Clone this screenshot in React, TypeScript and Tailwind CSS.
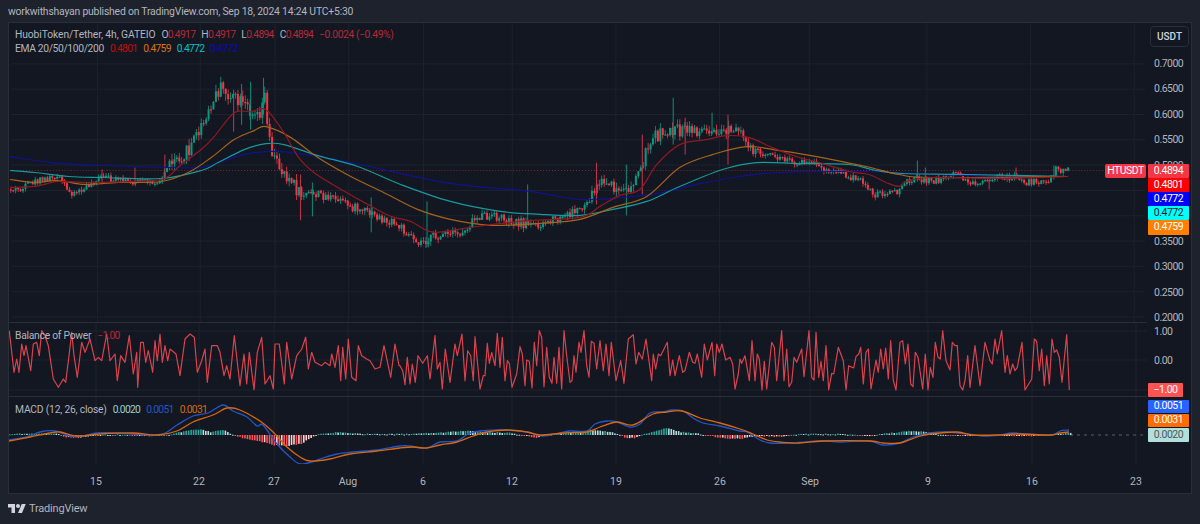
import React from "react";

type Pt = [number, number];

const pricePath: Pt[] = [
  [8, 190], [20, 190], [30, 183], [43, 180], [53, 176], [60, 182], [65, 192], [72, 193], [83, 190], [90, 182], [100, 178],
  [117, 182], [133, 182], [147, 183], [160, 180], [165, 167], [173, 157], [187, 153], [190, 143], [205, 120],
  [218, 88], [232, 100], [245, 108], [258, 112], [263, 92], [267, 130], [272, 158], [285, 175], [298, 195], [320, 195],
  [345, 205], [370, 215], [400, 228], [418, 242], [440, 236], [460, 235], [475, 218], [500, 218], [530, 226], [560, 220],
  [585, 205], [600, 182], [625, 195], [640, 170], [650, 140], [670, 130], [690, 132], [715, 128], [740, 135], [755, 150],
  [770, 157], [800, 163], [813, 164], [825, 172], [840, 173], [855, 180], [863, 182], [874, 195], [887, 192], [900, 193],
  [903, 182], [917, 179], [933, 182], [947, 178], [960, 173], [965, 183], [973, 184], [990, 183], [1000, 177], [1017, 178],
  [1028, 183], [1050, 182], [1057, 170], [1063, 170], [1069, 171],
];

const ema20: Pt[] = [
  [8, 188], [33, 187], [57, 182], [87, 183], [133, 182], [163, 179], [180, 165], [200, 150], [213, 137], [233, 113], [250, 112], [265, 110],
  [283, 133], [297, 157], [313, 173], [337, 188], [367, 205], [390, 217], [410, 222], [433, 233], [470, 228], [520, 222],
  [580, 218], [600, 207], [620, 196], [640, 190], [657, 165], [680, 145], [707, 140], [727, 136], [750, 138], [773, 148],
  [800, 158], [820, 163], [850, 172], [870, 175], [887, 183], [900, 187], [907, 182], [933, 178], [1000, 179], [1069, 177],
];
const ema50: Pt[] = [
  [8, 180], [33, 183], [57, 181], [83, 185], [117, 183], [160, 182], [187, 173], [210, 158], [233, 140], [253, 131], [265, 127], [290, 138],
  [317, 158], [350, 177], [383, 193], [417, 210], [450, 220], [490, 226], [540, 224], [580, 220], [613, 208], [647, 197],
  [680, 168], [713, 155], [747, 147], [780, 151], [800, 154], [833, 160], [867, 167], [900, 175], [933, 178], [1069, 177],
];
const ema100: Pt[] = [
  [8, 171], [33, 173], [67, 177], [100, 178], [160, 179], [200, 171], [217, 163], [243, 150], [265, 144], [283, 145], [317, 156], [357, 167],
  [400, 185], [450, 202], [500, 212], [540, 215], [580, 216], [613, 210], [647, 202], [680, 187], [723, 170], [757, 163],
  [800, 164], [850, 165], [877, 171], [903, 174], [967, 175], [1069, 177],
];
const ema200: Pt[] = [
  [8, 157], [50, 163], [100, 166], [167, 168], [200, 168], [217, 163], [243, 155], [265, 152], [290, 153], [350, 163], [450, 184],
  [530, 192], [580, 200], [623, 198], [663, 193], [697, 185], [740, 177], [780, 173], [867, 172], [917, 174], [1000, 177],
  [1069, 177],
];

const macdLine: Pt[] = [
  [9, 441], [27, 438], [40, 433], [55, 432], [70, 437], [83, 437], [97, 434], [117, 434], [133, 435], [160, 436],
  [177, 426], [193, 417], [208, 414], [223, 406], [233, 412], [247, 418], [257, 427], [263, 426], [277, 445], [290, 458],
  [300, 465], [312, 463], [323, 459], [337, 455], [353, 453], [377, 451], [400, 447], [410, 447], [420, 449], [430, 448],
  [440, 443], [457, 442], [468, 435], [480, 432], [507, 431], [527, 433], [542, 437], [560, 434], [570, 432], [587, 432],
  [595, 425], [607, 422], [617, 423], [630, 428], [640, 425], [650, 414], [663, 413], [672, 411], [683, 412], [693, 419],
  [703, 424], [720, 427], [740, 432], [747, 433], [760, 441], [770, 444], [790, 444], [820, 442], [840, 443], [870, 442],
  [883, 446], [900, 444], [913, 438], [930, 434], [947, 433], [967, 435], [983, 437], [1000, 436], [1013, 434], [1040, 436],
  [1053, 436], [1060, 432], [1069, 431],
];
const macdSignal: Pt[] = [
  [9, 442], [30, 438], [50, 434], [60, 433], [77, 437], [100, 435], [133, 434], [157, 436], [177, 432], [193, 423],
  [213, 416], [227, 409], [240, 411], [260, 422], [273, 433], [287, 448], [300, 458], [310, 462], [330, 460], [350, 455],
  [377, 452], [400, 449], [413, 448], [427, 449], [440, 446], [457, 443], [473, 437], [487, 433], [507, 431], [527, 433],
  [540, 436], [563, 434], [587, 433], [600, 428], [617, 423], [633, 426], [653, 415], [667, 413], [682, 412], [700, 419],
  [720, 424], [740, 430], [753, 435], [767, 441], [780, 443], [800, 444], [823, 442], [870, 442], [883, 444], [900, 444],
  [917, 438], [930, 435], [957, 433], [973, 436], [997, 436], [1017, 435], [1050, 436], [1060, 434], [1069, 433],
];

// histogram height in px, traced from the reference
const histPts: Pt[] = [
  [9, 1], [50, 1.5], [58, 1], [65, -2], [80, -3], [90, -0.5], [120, 0.5], [150, -1], [165, 0], [175, 2], [190, 5], [197, 6],
  [210, 3], [222, 5.5], [228, 2], [235, -1], [250, -5], [262, -7], [272, -10], [285, -11], [300, -9], [312, -2], [318, 1],
  [340, 3], [360, 1], [410, 1], [433, 2], [470, 4.5], [480, 3], [510, 2], [525, -1], [535, -3], [540, -1], [550, 1], [590, 5],
  [610, 3], [620, 0], [625, -3], [635, -3], [640, 0], [650, 3], [665, 7], [680, 3], [700, 1], [710, -1], [720, -3], [740, -4],
  [750, -2], [760, -1], [780, -2], [790, 0], [800, 1], [840, 1], [870, -1], [880, 1], [910, 4], [925, 3], [940, 0], [960, -0.5],
  [990, -0.5], [1030, -1], [1050, 0.5], [1070, 2],
];

// BOP line traced off three zoomed crops (3x), each with its own origin
const bopA: Pt[] = [
  [28, 35], [42, 160], [50, 120], [57, 160], [65, 75], [72, 110], [78, 80], [92, 155], [100, 75], [110, 70], [118, 110], [125, 35],
  [135, 50], [145, 80], [160, 180], [175, 205], [190, 180], [197, 190], [207, 110], [215, 40], [222, 110], [232, 175], [245, 70],
  [255, 100], [270, 60], [285, 125], [295, 115], [305, 125], [320, 45], [330, 125], [345, 105], [352, 185], [362, 110], [375, 130],
  [388, 50], [400, 165], [410, 100], [413, 205], [422, 70], [430, 70], [437, 130], [445, 95], [458, 160], [465, 65], [472, 125],
  [480, 45], [487, 130], [495, 80], [503, 125], [510, 90], [528, 105], [540, 170], [555, 60], [570, 45], [583, 55], [592, 160],
  [605, 125], [615, 90], [622, 190], [635, 80], [652, 80], [660, 100], [672, 170], [680, 140], [690, 180], [703, 50], [712, 130],
  [720, 200], [732, 105], [740, 195], [748, 100], [762, 212], [772, 100], [785, 55], [795, 195], [810, 170], [820, 210], [825, 75],
  [838, 75], [853, 195], [860, 70], [875, 180], [890, 110], [905, 90], [917, 55], [925, 150], [935, 100], [945, 130], [965, 140],
  [975, 130], [990, 140], [995, 105], [1005, 145], [1015, 80], [1022, 185], [1028, 85], [1037, 180], [1045, 60], [1055, 175],
  [1068, 185], [1075, 80], [1085, 110], [1100, 120], [1110, 125], [1125, 150], [1140, 145], [1152, 80], [1172, 175], [1185, 75], [1197, 140],
];
const bopB: Pt[] = [
  [0, 125], [8, 140], [15, 182], [22, 100], [30, 180], [37, 120], [46, 175], [54, 95], [68, 118], [82, 95], [90, 165], [105, 35],
  [112, 135], [120, 115], [127, 195], [136, 75], [150, 175], [165, 60], [172, 95], [186, 30], [195, 170], [203, 80], [212, 95],
  [220, 170], [225, 38], [240, 195], [250, 155], [255, 155], [262, 58], [268, 118], [275, 85], [285, 125], [292, 28], [300, 130],
  [307, 40], [315, 170], [322, 110], [328, 118], [336, 190], [350, 150], [360, 68], [367, 90], [375, 185], [380, 108], [388, 112],
  [396, 192], [403, 55], [410, 125], [418, 20], [425, 40], [432, 188], [440, 70], [448, 160], [456, 178], [462, 100], [470, 178],
  [477, 70], [485, 195], [492, 20], [500, 95], [510, 175], [516, 170], [522, 95], [528, 145], [537, 55], [543, 85], [552, 20],
  [560, 125], [567, 160], [574, 52], [582, 58], [590, 135], [600, 50], [610, 140], [618, 60], [627, 155], [634, 55], [648, 170],
  [662, 110], [672, 178], [685, 45], [700, 32], [708, 120], [716, 85], [727, 105], [738, 45], [755, 170], [760, 90], [767, 135],
  [775, 90], [782, 95], [802, 55], [810, 155], [818, 108], [825, 155], [838, 95], [848, 145], [855, 140], [868, 85], [878, 115],
  [885, 118], [892, 90], [905, 160], [913, 60], [922, 108], [936, 55], [944, 155], [950, 60], [958, 85], [966, 60], [977, 108],
  [990, 100], [998, 120], [1005, 195], [1015, 150],
];
const bopC: Pt[] = [
  [0, 105], [5, 118], [15, 95], [28, 170], [36, 50], [45, 170], [52, 90], [58, 105], [66, 198], [73, 112], [80, 195], [95, 55],
  [103, 70], [110, 170], [125, 20], [132, 170], [140, 75], [147, 188], [155, 175], [162, 100], [170, 115], [185, 75], [192, 158],
  [207, 20], [215, 160], [222, 168], [228, 25], [236, 160], [243, 112], [250, 170], [258, 65], [266, 198], [275, 148], [281, 150],
  [295, 70], [310, 110], [318, 198], [326, 125], [341, 132], [348, 98], [356, 90], [362, 70], [370, 180], [378, 85], [385, 75],
  [393, 195], [408, 108], [415, 145], [422, 75], [430, 135], [437, 72], [445, 165], [452, 50], [460, 170], [468, 198], [480, 55],
  [488, 50], [496, 120], [504, 60], [512, 180], [519, 188], [526, 85], [534, 100], [548, 195], [556, 90], [564, 198], [571, 130],
  [579, 160], [586, 55], [594, 100], [601, 105], [608, 20], [618, 110], [630, 138], [637, 55], [645, 65], [652, 65], [660, 185],
  [668, 198], [675, 170], [683, 95], [690, 190], [705, 65], [720, 185], [735, 55], [750, 110], [757, 120], [765, 45], [772, 90],
  [785, 20], [795, 145], [802, 95], [810, 150], [818, 120], [825, 140], [832, 130], [846, 55], [855, 198], [875, 165], [883, 45],
  [890, 52], [898, 140], [905, 75], [913, 185], [920, 95], [928, 180], [936, 45], [943, 85], [950, 78], [958, 100], [966, 175],
  [980, 32], [988, 198],
];

// wicks that stick out in the reference: x, top, bottom, up?
const bigWicks: [number, number, number, boolean][] = [
  [262, 78, 115, true], [249, 82, 130, true], [240, 84, 125, true], [232, 90, 132, false], [426, 202, 248, true], [370, 198, 233, true],
  [299, 175, 221, false], [311, 183, 217, true], [527, 185, 224, true], [673, 98, 145, true], [728, 115, 165, false], [685, 118, 155, false],
  [642, 135, 195, false], [596, 163, 205, false], [626, 165, 216, true], [712, 113, 135, true], [918, 161, 182, true], [926, 168, 182, true],
  [1055, 166, 180, true], [100, 170, 185, false], [133, 168, 185, false], [163, 155, 180, false], [1017, 168, 180, false], [990, 180, 190, false],
];

const timeLabels: [string, number][] = [
  ["15", 96], ["22", 199], ["27", 274], ["Aug", 348], ["6", 423], ["12", 512], ["19", 616], ["26", 720], ["Sep", 810], ["9", 928], ["16", 1032], ["23", 1136],
];
// 0.4500 and 0.4000 sit behind the price tags
const priceLabels = ["0.7000", "0.6500", "0.6000", "0.5500", "0.5000", "", "", "0.3500", "0.3000", "0.2500", "0.2000"];

const rng = (seed: number) => () => {
  seed = (seed + 0x6d2b79f5) | 0;
  let t = Math.imul(seed ^ (seed >>> 15), 1 | seed);
  t = (t + Math.imul(t ^ (t >>> 7), 61 | t)) ^ t;
  return ((t ^ (t >>> 14)) >>> 0) / 4294967296;
};

const interp = (pts: Pt[], x: number) => {
  for (let i = 1; i < pts.length; i++) {
    if (x <= pts[i][0]) {
      const [x0, y0] = pts[i - 1];
      const [x1, y1] = pts[i];
      return y0 + ((y1 - y0) * (x - x0)) / (x1 - x0);
    }
  }
  return pts[pts.length - 1][1];
};

const smooth = (pts: Pt[]) => {
  let d = `M${pts[0][0]} ${pts[0][1]}`;
  for (let i = 0; i < pts.length - 1; i++) {
    const p0 = pts[Math.max(i - 1, 0)];
    const p1 = pts[i];
    const p2 = pts[i + 1];
    const p3 = pts[Math.min(i + 2, pts.length - 1)];
    const c1x = p1[0] + (p2[0] - p0[0]) / 6;
    const c1y = p1[1] + (p2[1] - p0[1]) / 6;
    const c2x = p2[0] - (p3[0] - p1[0]) / 6;
    const c2y = p2[1] - (p3[1] - p1[1]) / 6;
    d += ` C${c1x.toFixed(1)} ${c1y.toFixed(1)} ${c2x.toFixed(1)} ${c2y.toFixed(1)} ${p2[0]} ${p2[1]}`;
  }
  return d;
};

const makeCandles = () => {
  const r = rng(42);
  const out: { x: number; top: number; bot: number; hi: number; lo: number; up: boolean }[] = [];
  let prev = interp(pricePath, 8);
  for (let x = 8.5; x <= 1070; x += 2.45) {
    const vol = x > 170 && x < 300 ? 10 : x > 590 && x < 760 ? 8 : x > 300 && x < 590 ? 6 : 4.5;
    const close = interp(pricePath, x) + (r() - 0.5) * vol * 1.6;
    const up = close < prev;
    const top = Math.min(prev, close);
    const bot = Math.max(prev, close);
    out.push({ x, top, bot, hi: top - r() * vol * 0.7, lo: bot + r() * vol * 0.7, up });
    prev = close;
  }
  return out;
};

const bopPoints = () => {
  const pts: Pt[] = [
    ...bopA.map(([x, y]): Pt => [x / 3, 320 + y / 3]),
    ...bopB.map(([x, y]): Pt => [400 + x / 3, 325 + y / 3]),
    ...bopC.map(([x, y]): Pt => [740 + x / 3, 325 + y / 3]),
  ];
  return pts.map(([a, b]) => `${a.toFixed(1)},${b.toFixed(1)}`).join(" ");
};

const makeHist = () => {
  const r = rng(19);
  const bars: { x: number; h: number; color: string }[] = [];
  let last = 0;
  for (let x = 9; x <= 1070; x += 2.45) {
    const h = interp(histPts, x) + (r() - 0.5) * 1;
    const rising = h > last;
    const color = h >= 0 ? (rising ? "#26a69a" : "#b2dfdb") : rising ? "#ffcdd2" : "#ff5252";
    bars.push({ x, h, color });
    last = h;
  }
  return bars;
};

const candles = makeCandles();
const bop = bopPoints();
const hist = makeHist();

const VGrid = ({ y1, y2 }: { y1: number; y2: number }) => (
  <g stroke="#1e222d" strokeWidth="1">
    {timeLabels.map(([t, x]) => (
      <line key={t} x1={x} x2={x} y1={y1} y2={y2} />
    ))}
  </g>
);

const MainChart = () => (
  <svg viewBox="9 23 1138 300" className="block w-full h-full">
    <VGrid y1={23} y2={323} />
    <g stroke="#1e222d" strokeWidth="1">
      {[64, 89.4, 114.8, 140.2, 165.6, 191, 216.4, 241.8, 267.2, 292.6, 318].map((y) => (
        <line key={y} x1={9} x2={1147} y1={y} y2={y} />
      ))}
    </g>
    {candles.map((c) => (
      <g key={c.x} fill={c.up ? "#089981" : "#f23645"}>
        <rect x={c.x} y={c.hi} width="0.8" height={c.lo - c.hi} />
        <rect x={c.x - 0.6} y={c.top} width="2" height={Math.max(c.bot - c.top, 1.2)} />
      </g>
    ))}
    {bigWicks.map(([x, a, b, up]) => (
      <rect key={x} x={x} y={a} width="1" height={b - a} fill={up ? "#0b8f79" : "#c9344a"} />
    ))}
    <line x1={9} x2={1147} y1={171} y2={171} stroke="#f23645" strokeOpacity="0.5" strokeDasharray="1 2" />
    <g fill="none" strokeWidth="1.2" strokeLinejoin="round">
      <path d={smooth(ema200)} stroke="#12128f" />
      <path d={smooth(ema100)} stroke="#179a9c" />
      <path d={smooth(ema50)} stroke="#a5641d" />
      <path d={smooth(ema20)} stroke="#8f1a22" />
    </g>
  </svg>
);

const BopChart = () => (
  <svg viewBox="9 324 1138 73" className="block w-full h-full">
    <VGrid y1={324} y2={397} />
    <g stroke="#1e222d" strokeWidth="1">
      {[332, 361, 391].map((y) => (
        <line key={y} x1={9} x2={1147} y1={y} y2={y} />
      ))}
    </g>
    <polyline points={bop} fill="none" stroke="#d9434d" strokeWidth="1.2" strokeLinejoin="round" />
  </svg>
);

const MacdChart = () => (
  <svg viewBox="9 398 1138 67" className="block w-full h-full">
    <VGrid y1={398} y2={465} />
    <line x1={1070} x2={1147} y1={436} y2={436} stroke="#787b86" strokeOpacity="0.7" strokeDasharray="3 4" />
    {hist.map((b) => (
      <rect key={b.x} x={b.x} y={b.h > 0 ? 436 - b.h : 436} width="1.6" height={Math.max(Math.abs(b.h), 1)} fill={b.color} />
    ))}
    <g fill="none" strokeWidth="1.3">
      <path d={smooth(macdLine)} stroke="#2456c8" />
      <path d={smooth(macdSignal)} stroke="#d9680f" />
    </g>
  </svg>
);

const Tag = ({ className, children }: { className: string; children: React.ReactNode }) => (
  <div className={`absolute flex items-center justify-center rounded-[1px] text-[10.5px] leading-none tracking-[-0.5px] ${className}`}>{children}</div>
);

const App = () => {
  return (
    <div className="w-[1200px] h-[524px] bg-[#1e222d] flex flex-col overflow-hidden font-['Roboto',sans-serif] text-[#b2b5be]">
      <div className="h-[22px] pl-2 pt-[2px] flex items-center text-[10.4px] tracking-[-0.2px] text-[#b2b5be]">
        workwithshayan published on TradingView.com, Sep 18, 2024 14:24 UTC+5:30
      </div>

      <div className="relative mx-2 h-[472px] border border-[#2a2e39] bg-[#131722] flex">
        <div className="w-[1138px] flex flex-col">
          <div className="relative h-[300px] border-b border-[#2a2e39]">
            <MainChart />
            <div className="absolute left-[6px] top-[5px] text-[10.3px] leading-[14px]">
              <div className="flex gap-[6px]">
                <span className="tracking-[-0.1px]">HuobiToken/Tether, 4h, GATEIO</span>
                <span className="tracking-[-0.7px]">O<span className="text-[#b52a37]">0.4917</span></span>
                <span className="tracking-[-0.7px]">H<span className="text-[#b52a37]">0.4917</span></span>
                <span className="tracking-[-0.7px]">L<span className="text-[#b52a37]">0.4894</span></span>
                <span className="tracking-[-0.7px]">C<span className="text-[#b52a37]">0.4894</span></span>
                <span className="tracking-[-0.4px] text-[#b52a37]">−0.0024 (−0.49%)</span>
              </div>
              <div className="flex gap-[6px]">
                <span className="tracking-[-0.35px]">EMA 20/50/100/200</span>
                <span className="tracking-[-0.7px] text-[#c00d0d]">0.4801</span>
                <span className="tracking-[-0.7px] text-[#d87410]">0.4759</span>
                <span className="tracking-[-0.7px] text-[#00c4c4]">0.4772</span>
                <span className="tracking-[-0.7px] text-[#0b0bb5]">0.4772</span>
              </div>
            </div>
          </div>
          <div className="relative h-[74px] border-b border-[#2a2e39]">
            <BopChart />
            <div className="absolute left-[6px] top-[6px] flex gap-[6px] text-[10.3px] leading-[14px]">
              <span className="tracking-[-0.25px]">Balance of Power</span>
              <span className="tracking-[-0.7px] text-[#b52a37]">−1.00</span>
            </div>
          </div>
          <div className="relative h-[67px]">
            <MacdChart />
            <div className="absolute left-[6px] top-[6px] flex gap-[6px] text-[10.3px] leading-[14px]">
              <span className="tracking-[-0.2px]">MACD (12, 26, close)</span>
              <span className="tracking-[-0.7px] text-[#9ccfc9]">0.0020</span>
              <span className="tracking-[-0.7px] text-[#2456c8]">0.0051</span>
              <span className="tracking-[-0.7px] text-[#d9680f]">0.0031</span>
            </div>
          </div>
          <div className="relative flex-1 text-[10.5px]">
            {timeLabels.map(([t, x]) => (
              <span key={t} className="absolute top-[11px] -translate-x-1/2 leading-[14px]" style={{ left: x - 9 }}>
                {t}
              </span>
            ))}
          </div>
        </div>

        <div className="relative flex-1 text-[10.5px] tracking-[-0.5px]">
          <div className="h-[301px] pt-[3px]">
            <div className="ml-[3px] w-[39px] h-[21px] flex items-center justify-center rounded border border-[#2a2e39] bg-[#131722] text-[#d1d4dc] text-[10px] font-medium tracking-normal">
              USDT
            </div>
            <div className="pt-[4px] pl-[7px]">
              {priceLabels.map((p, i) => (
                <div key={i} className="h-[25.4px] leading-[25.4px]">
                  {p}
                </div>
              ))}
            </div>
          </div>
          <div className="pl-[7px]">
            <div className="h-[16px] leading-[16px]">1.00</div>
            <div className="mt-[13px] h-[16px] leading-[16px]">0.00</div>
          </div>

          <Tag className="-left-[42px] top-[141px] w-[41px] h-[14px] rounded-[2px] bg-[#f23645] text-white">HTUSDT</Tag>
          <Tag className="left-[1px] top-[141px] w-[41px] h-[14px] bg-[#f23645] text-white">0.4894</Tag>
          <Tag className="left-[1px] top-[155px] w-[41px] h-[14px] bg-[#ff0000] text-white">0.4801</Tag>
          <Tag className="left-[1px] top-[169px] w-[41px] h-[14px] bg-[#0000ff] text-white">0.4772</Tag>
          <Tag className="left-[1px] top-[183px] w-[41px] h-[14px] bg-[#00ffff] text-[#131722]">0.4772</Tag>
          <Tag className="left-[1px] top-[197px] w-[41px] h-[15px] bg-[#ff8000] text-white">0.4759</Tag>
          <Tag className="left-[1px] top-[360px] w-[35px] h-[14px] bg-[#ff5252] text-white">−1.00</Tag>
          <Tag className="left-[1px] top-[377px] w-[41px] h-[13px] bg-[#2962ff] text-white">0.0051</Tag>
          <Tag className="left-[1px] top-[391px] w-[41px] h-[13px] bg-[#ff6d00] text-white">0.0031</Tag>
          <Tag className="left-[1px] top-[405px] w-[41px] h-[14px] bg-[#b2dfdb] text-[#4a5a58]">0.0020</Tag>
        </div>
      </div>

      <div className="flex-1 pl-2 flex items-center gap-[3px]">
        <svg viewBox="0 0 36 28" className="w-[18px] h-[14px]" fill="#d1d4dc">
          <path d="M14 22H7V11H0V4h14v18zM28 22h-8l7.5-18h8L28 22z" />
          <circle cx="20" cy="8" r="4" />
        </svg>
        <span className="text-[11px] tracking-[-0.2px] text-[#b2b5be]">TradingView</span>
      </div>
    </div>
  );
};

export default App;
